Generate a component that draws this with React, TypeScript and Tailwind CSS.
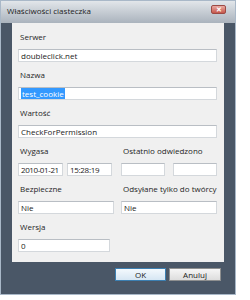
import React from 'react';

const Label: React.FC<{ text: string }> = ({ text }) => (
  <div className="h-[10px] leading-[10px] text-[8px] text-[#262626] pl-[2px] mb-[7px]">{text}</div>
);

const Field: React.FC<{ value?: string; className?: string; children?: React.ReactNode }> = ({ value, className, children }) => (
  <div className={`h-[13px] bg-white border border-[#d4d8dc] border-t-[#b9bec4] text-[8px] leading-[11px] pl-[2px] text-[#1a1a1a] whitespace-nowrap overflow-hidden ${className ?? 'w-full'}`}>
    {children ?? value}
  </div>
);

const App: React.FC = (): JSX.Element => {
  return (
    <div className="w-[250px] h-[300px] bg-white" style={{ fontFamily: '"Open Sans", "Noto Sans", sans-serif' }}>
      <div className="w-[236px] h-[295px] border border-[#a9b8c8] bg-[#4a5767] flex flex-col">
        {/* title bar */}
        <div className="h-[22px] flex items-start justify-between pl-[6px] pr-[9px] pt-[4px] bg-gradient-to-b from-[#e2e6ea] to-[#aab3bd]">
          <span className="text-[8px] leading-[12px] text-[#1c1c1c]">Właściwości ciasteczka</span>
          <div className="w-[15px] h-[9px] rounded-[2px] border border-[#9c4a44] bg-gradient-to-b from-[#e9aaa3] to-[#c5564c] flex items-center justify-center text-white text-[7px] leading-none font-bold">
            ✕
          </div>
        </div>

        {/* panel */}
        <div className="mx-[11px] h-[239px] bg-[#f0f0f0] pt-[9px] pl-[6px] pr-[7px]">
          <Label text="Serwer" />
          <Field value="doubleclick.net" />
          <div className="h-[8px]" />
          <Label text="Nazwa" />
          <Field>
            <span className="bg-[#3399ff] text-white px-[1px]">test_cookie</span>
          </Field>
          <div className="h-[8px]" />
          <Label text="Wartość" />
          <Field value="CheckForPermission" />
          <div className="h-[8px]" />

          <div className="grid grid-cols-2 gap-x-[7px]">
            <div>
              <Label text="Wygasa" />
              <div className="flex gap-[4px]">
                <Field value="2010-01-21" className="w-[45px] tracking-[-0.4px]" />
                <Field value="15:28:19" className="w-[45px] tracking-[-0.3px]" />
              </div>
            </div>
            <div>
              <Label text="Ostatnio odwiedzono" />
              <div className="flex justify-between">
                <Field className="w-[44px]" />
                <Field className="w-[44px]" />
              </div>
            </div>
          </div>
          <div className="h-[8px]" />

          <div className="grid grid-cols-2 gap-x-[7px]">
            <div>
              <Label text="Bezpieczne" />
              <Field value="Nie" className="w-full text-[#1a1a1a]" />
            </div>
            <div>
              <Label text="Odsyłane tylko do twórcy" />
              <Field value="Nie" className="w-full text-[#1a1a1a]" />
            </div>
          </div>
          <div className="h-[8px]" />

          <Label text="Wersja" />
          <Field value="0" className="w-[92px]" />
        </div>

        {/* buttons */}
        <div className="flex justify-end gap-[3px] pt-[6px] pr-[14px]">
          <button className="w-[51px] h-[13px] border border-[#3c7fb1] bg-gradient-to-b from-[#f4f9fd] to-[#d6e6f3] text-[8px] leading-[11px] text-[#1a1a1a]">
            OK
          </button>
          <button className="w-[52px] h-[13px] border border-[#8e8f8f] bg-gradient-to-b from-[#f6f6f6] to-[#dddddd] text-[8px] leading-[11px] text-[#1a1a1a]">
            Anuluj
          </button>
        </div>
      </div>
    </div>
  );
};

export default App;
